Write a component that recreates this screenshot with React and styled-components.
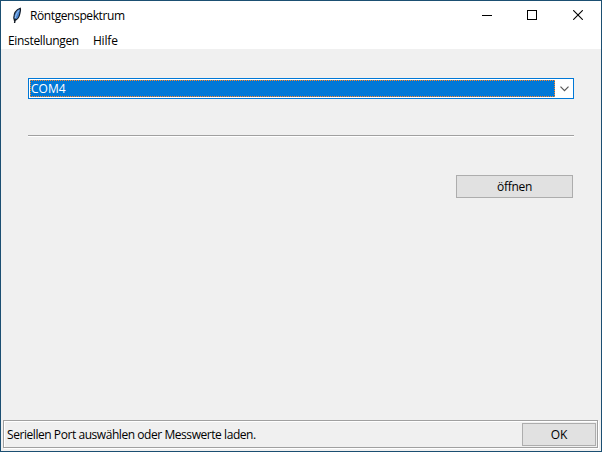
import React from "react";
import styled, { createGlobalStyle } from "styled-components";

const GlobalStyle = createGlobalStyle`
  * { box-sizing: border-box; }
  body { margin: 0; overflow: hidden; }
`;

const Window = styled.div`
  width: 602px;
  height: 452px;
  display: flex;
  flex-direction: column;
  border: 1px solid #1b4f72;
  background: #f0f0f0;
  color: #000;
  font-family: "Open Sans", "Noto Sans", sans-serif;
  font-size: 12px;
  line-height: 16px;
`;

const Label = styled.span`
  display: block;
  white-space: nowrap;
  letter-spacing: ${(p) => p.$spacing || 0}px;
`;

const TitleBar = styled.header`
  height: 30px;
  flex: none;
  display: flex;
  align-items: center;
  padding-left: 9px;
  background: #fff;
`;

const Title = styled(Label)`
  flex: 1;
  margin-left: 4px;
`;

const Caption = styled.button`
  width: ${(p) => p.$width || 45}px;
  height: 28px;
  padding: 0;
  border: 0;
  background: transparent;
  display: flex;
  align-items: center;
  justify-content: center;
  svg { display: block; }
`;

const Captions = styled.div`
  display: flex;
  align-self: flex-start;
`;

const MenuBar = styled.nav`
  height: 18px;
  flex: none;
  display: flex;
  align-items: center;
  gap: 14px;
  padding: 2px 0 0 7px;
  background: #fff;
`;

const Content = styled.main`
  flex: 1;
  display: flex;
  flex-direction: column;
  padding: 29px 27px 0;
`;

const Combo = styled.div`
  height: 21px;
  width: 546px;
  display: flex;
  padding: 1px;
  border: 1px solid #0078d7;
  background: #fff;
`;

const dotsX = "repeating-linear-gradient(90deg, #ff8728 0 1px, #0078d7 1px 2px)";
const dotsY = "repeating-linear-gradient(180deg, #ff8728 0 1px, #0078d7 1px 2px)";

const Selection = styled.div`
  width: 525px;
  height: 17px;
  display: flex;
  align-items: center;
  padding-left: 1px;
  background:
    ${dotsX} top / 100% 1px no-repeat,
    ${dotsX} bottom / 100% 1px no-repeat,
    ${dotsY} left / 1px 100% no-repeat,
    ${dotsY} right / 1px 100% no-repeat,
    #0078d7;
  color: #fff;
`;

const Arrow = styled.div`
  flex: 1;
  display: flex;
  align-items: center;
  justify-content: center;
  padding-left: 2px;
`;

const Separator = styled.div`
  width: 546px;
  height: 2px;
  margin-top: 36px;
  border-top: 1px solid #a0a0a0;
  border-bottom: 1px solid #fff;
`;

const Button = styled.button`
  width: ${(p) => p.$width}px;
  height: 23px;
  padding: 0;
  display: flex;
  align-items: center;
  justify-content: center;
  border: 1px solid #adadad;
  background: #e1e1e1;
  color: #000;
  font: inherit;
`;

const Actions = styled.div`
  display: flex;
  justify-content: flex-end;
  width: 545px;
  margin-top: 38px;
`;

const StatusBar = styled.footer`
  flex: none;
  height: 28px;
  margin: 0 3px 3px 2px;
  border: 1px solid #a0a0a0;
  box-shadow: 1px 1px 0 #fff, inset 1px 1px 0 #fff;
  display: flex;
  align-items: center;
  justify-content: space-between;
  padding: 1px 1px 0 3px;
`;

const Feather = () => (
  <svg width="16" height="18" viewBox="0 0 16 18">
    <path d="M10.3 1.3C6.7 2.6 3.9 6.3 3.8 10.9L4.4 13.4C7.2 12.9 9 10.4 9.6 7.5C10.1 5.2 11 3.1 10.3 1.3Z" fill="#4a86d2" stroke="#111a26" strokeWidth="1.2" />
    <path d="M8.9 3.4C6.6 6.2 5.6 8.8 5.1 11.4" fill="none" stroke="#a5cbf8" strokeWidth="1" />
    <path d="M5.2 11.7L4.6 16" fill="none" stroke="#101820" strokeWidth="1.4" />
  </svg>
);

export default function App() {
  return (
    <>
      <GlobalStyle />
      <Window>
        <TitleBar>
          <Feather />
          <Title $spacing={-0.4}>Röntgenspektrum</Title>
          <Captions>
            <Caption aria-label="Minimieren">
              <svg width="10" height="10" shapeRendering="crispEdges"><path d="M0 5.5H10" stroke="#000" /></svg>
            </Caption>
            <Caption aria-label="Maximieren">
              <svg width="10" height="10" shapeRendering="crispEdges"><path d="M.5 .5H9.5V9.5H.5Z" fill="none" stroke="#000" /></svg>
            </Caption>
            <Caption $width={47} aria-label="Schließen">
              <svg width="10" height="10"><path d="M.2 .2L9.8 9.8M9.8 .2L.2 9.8" stroke="#000" strokeWidth="1.1" /></svg>
            </Caption>
          </Captions>
        </TitleBar>
        <MenuBar>
          <Label $spacing={-0.33}>Einstellungen</Label>
          <Label $spacing={-0.15}>Hilfe</Label>
        </MenuBar>
        <Content>
          <Combo>
            <Selection><Label>COM4</Label></Selection>
            <Arrow>
              <svg width="9" height="6"><path d="M.5 .7L4.5 4.7L8.5 .7" fill="none" stroke="#555" strokeWidth="1.2" /></svg>
            </Arrow>
          </Combo>
          <Separator />
          <Actions>
            <Button $width={117}><Label $spacing={-0.3}>öffnen</Label></Button>
          </Actions>
        </Content>
        <StatusBar>
          <Label $spacing={-0.44}>Seriellen Port auswählen oder Messwerte laden.</Label>
          <Button $width={74}><Label>OK</Label></Button>
        </StatusBar>
      </Window>
    </>
  );
}
